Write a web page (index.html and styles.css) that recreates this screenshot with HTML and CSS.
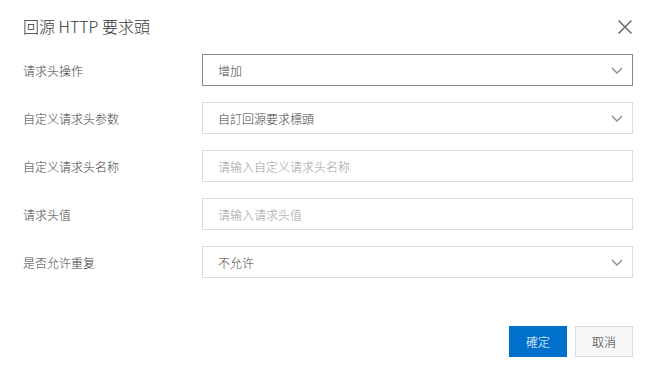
FILE: index.html
```html
<!DOCTYPE html>
<html lang="zh">
<head>
  <meta charset="UTF-8">
  <title>回源 HTTP 要求頭</title>
  <link rel="stylesheet" href="styles.css">
</head>
<body>
<div class="dialog">
  <div class="dialog-header">
    <div class="dialog-title">回源 HTTP 要求頭</div>
    <svg class="close" width="16" height="16" viewBox="0 0 16 16">
      <path d="M1.5 1.5 L14.5 14.5 M14.5 1.5 L1.5 14.5" stroke="#707070" stroke-width="1.6" fill="none"/>
    </svg>
  </div>

  <div class="form">
    <div class="form-row">
      <div class="form-label">请求头操作</div>
      <div class="field select active">
        <span class="value">增加</span>
        <svg class="arrow" width="12" height="7" viewBox="0 0 12 7"><path d="M1 1 L6 6 L11 1" stroke="#888" stroke-width="1.3" fill="none"/></svg>
      </div>
    </div>
    <div class="form-row">
      <div class="form-label">自定义请求头参数</div>
      <div class="field select">
        <span class="value">自訂回源要求標頭</span>
        <svg class="arrow" width="12" height="7" viewBox="0 0 12 7"><path d="M1 1 L6 6 L11 1" stroke="#888" stroke-width="1.3" fill="none"/></svg>
      </div>
    </div>
    <div class="form-row">
      <div class="form-label">自定义请求头名称</div>
      <div class="field">
        <span class="placeholder">请输入自定义请求头名称</span>
      </div>
    </div>
    <div class="form-row">
      <div class="form-label">请求头值</div>
      <div class="field">
        <span class="placeholder">请输入请求头值</span>
      </div>
    </div>
    <div class="form-row">
      <div class="form-label">是否允许重复</div>
      <div class="field select">
        <span class="value">不允许</span>
        <svg class="arrow" width="12" height="7" viewBox="0 0 12 7"><path d="M1 1 L6 6 L11 1" stroke="#888" stroke-width="1.3" fill="none"/></svg>
      </div>
    </div>
  </div>

  <div class="dialog-footer">
    <button class="btn btn-primary">確定</button>
    <button class="btn btn-normal">取消</button>
  </div>
</div>
</body>
</html>
```

FILE: styles.css
```css
body {
  margin: 0;
  background-color: #fff;
  color: #333;
  font-family: "Noto Sans CJK SC", "Noto Sans", sans-serif;
  font-weight: 300;
}
.dialog {
  width: 654px;
  height: 370px;
  box-sizing: border-box;
  padding: 0 21px 0 23px;
}
.dialog-header {
  display: flex;
  justify-content: space-between;
  align-items: center;
  height: 54px;
}
.dialog-title {
  font-size: 16px;
  color: #333;
  line-height: 24px;
  margin-top: -2px;
}
.close {
  margin-top: -1px;
}
.form {
  display: flex;
  flex-direction: column;
  gap: 16px;
}
.form-row {
  display: flex;
  align-items: center;
  height: 32px;
}
.form-label {
  width: 179px;
  font-size: 12px;
  color: #444;
}
.field {
  flex: 1;
  height: 32px;
  box-sizing: border-box;
  border: 1px solid #dcdcdc;
  display: flex;
  align-items: center;
  justify-content: space-between;
  padding: 0 9px 0 15px;
  font-size: 12px;
}
.field.active {
  border-color: #888;
}
.value {
  color: #444;
}
.placeholder {
  color: #a0a0a0;
}
.arrow {
  display: block;
}
.dialog-footer {
  display: flex;
  justify-content: flex-end;
  gap: 8px;
  margin-top: 48px;
}
.btn {
  width: 58px;
  height: 31px;
  font-family: "Noto Sans CJK SC", sans-serif;
  font-weight: 300;
  font-size: 12px;
  border: 1px solid transparent;
  padding: 0;
}
.btn-primary {
  background-color: #0070cc;
  color: #fff;
}
.btn-normal {
  background-color: #f7f7f7;
  border-color: #dcdcdc;
  color: #333;
}
```
